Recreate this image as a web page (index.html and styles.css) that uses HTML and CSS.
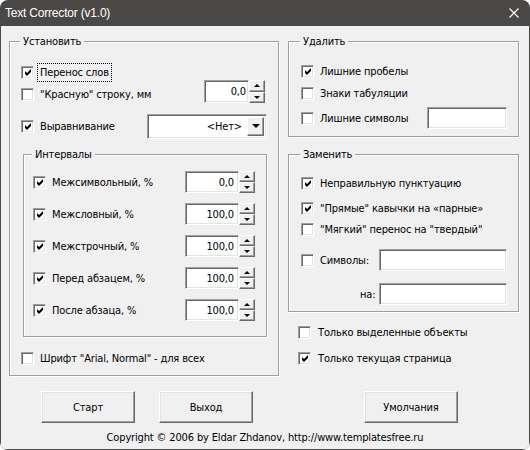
FILE: index.html
```html
<!DOCTYPE html>
<html lang="ru">
<head>
<meta charset="utf-8">
<title>Text Corrector (v1.0)</title>
<link rel="stylesheet" href="styles.css">
</head>
<body>
<div class="window">
  <div class="titlebar">
    <span class="title">Text Corrector (v1.0)</span>
    <svg class="close" viewBox="0 0 10 10" width="10" height="10"><path d="M0.5 0.5 L9.5 9.5 M9.5 0.5 L0.5 9.5" stroke="#fff" stroke-width="1.1" fill="none"/></svg>
  </div>
  <div class="client">
    <div class="columns">
      <div class="group g-set">
        <span class="legend">Установить</span>
        <div class="row s-r1">
          <span class="cb on"><svg viewBox="0 0 9 9" width="9" height="9"><path d="M1 3 L3 5 L7 1 V4 L3 8 L1 6 Z" fill="#000"/></svg></span>
          <span class="lbl focus">Перенос слов</span>
        </div>
        <div class="row s-r2">
          <span class="cb"></span>
          <span class="lbl">"Красную" строку, мм</span>
          <div class="spin spin-a">
            <span class="edit">0,0</span>
            <span class="updown"><span class="sb up"></span><span class="sb down"></span></span>
          </div>
        </div>
        <div class="row s-r3">
          <span class="cb on"><svg viewBox="0 0 9 9" width="9" height="9"><path d="M1 3 L3 5 L7 1 V4 L3 8 L1 6 Z" fill="#000"/></svg></span>
          <span class="lbl">Выравнивание</span>
          <div class="combo"><span class="combo-text">&lt;Нет&gt;</span><span class="dd"></span></div>
        </div>
        <div class="group g-int">
          <span class="legend">Интервалы</span>
          <div class="irow first">
            <span class="cb on"><svg viewBox="0 0 9 9" width="9" height="9"><path d="M1 3 L3 5 L7 1 V4 L3 8 L1 6 Z" fill="#000"/></svg></span>
            <span class="lbl">Межсимвольный, %</span>
            <div class="spin spin-b"><span class="edit">0,0</span><span class="updown"><span class="sb up"></span><span class="sb down"></span></span></div>
          </div>
          <div class="irow">
            <span class="cb on"><svg viewBox="0 0 9 9" width="9" height="9"><path d="M1 3 L3 5 L7 1 V4 L3 8 L1 6 Z" fill="#000"/></svg></span>
            <span class="lbl">Межсловный, %</span>
            <div class="spin spin-b"><span class="edit">100,0</span><span class="updown"><span class="sb up"></span><span class="sb down"></span></span></div>
          </div>
          <div class="irow">
            <span class="cb on"><svg viewBox="0 0 9 9" width="9" height="9"><path d="M1 3 L3 5 L7 1 V4 L3 8 L1 6 Z" fill="#000"/></svg></span>
            <span class="lbl">Межстрочный, %</span>
            <div class="spin spin-b"><span class="edit">100,0</span><span class="updown"><span class="sb up"></span><span class="sb down"></span></span></div>
          </div>
          <div class="irow">
            <span class="cb on"><svg viewBox="0 0 9 9" width="9" height="9"><path d="M1 3 L3 5 L7 1 V4 L3 8 L1 6 Z" fill="#000"/></svg></span>
            <span class="lbl">Перед абзацем, %</span>
            <div class="spin spin-b"><span class="edit">100,0</span><span class="updown"><span class="sb up"></span><span class="sb down"></span></span></div>
          </div>
          <div class="irow">
            <span class="cb on"><svg viewBox="0 0 9 9" width="9" height="9"><path d="M1 3 L3 5 L7 1 V4 L3 8 L1 6 Z" fill="#000"/></svg></span>
            <span class="lbl">После абзаца, %</span>
            <div class="spin spin-b"><span class="edit">100,0</span><span class="updown"><span class="sb up"></span><span class="sb down"></span></span></div>
          </div>
        </div>
        <div class="row s-r4">
          <span class="cb"></span>
          <span class="lbl">Шрифт "Arial, Normal" - для всех</span>
        </div>
      </div>

      <div class="rightcol">
        <div class="group g-del">
          <span class="legend">Удалить</span>
          <div class="row d-r1">
            <span class="cb on"><svg viewBox="0 0 9 9" width="9" height="9"><path d="M1 3 L3 5 L7 1 V4 L3 8 L1 6 Z" fill="#000"/></svg></span>
            <span class="lbl">Лишние пробелы</span>
          </div>
          <div class="row d-r2">
            <span class="cb"></span>
            <span class="lbl">Знаки табуляции</span>
          </div>
          <div class="row d-r3">
            <span class="cb"></span>
            <span class="lbl">Лишние символы</span>
            <span class="field f-del"></span>
          </div>
        </div>
        <div class="group g-rep">
          <span class="legend">Заменить</span>
          <div class="row z-r1">
            <span class="cb on"><svg viewBox="0 0 9 9" width="9" height="9"><path d="M1 3 L3 5 L7 1 V4 L3 8 L1 6 Z" fill="#000"/></svg></span>
            <span class="lbl">Неправильную пунктуацию</span>
          </div>
          <div class="row z-r2">
            <span class="cb on"><svg viewBox="0 0 9 9" width="9" height="9"><path d="M1 3 L3 5 L7 1 V4 L3 8 L1 6 Z" fill="#000"/></svg></span>
            <span class="lbl">"Прямые" кавычки на «парные»</span>
          </div>
          <div class="row z-r3">
            <span class="cb"></span>
            <span class="lbl">"Мягкий" перенос на "твердый"</span>
          </div>
          <div class="row z-r4">
            <span class="cb"></span>
            <span class="lbl">Символы:</span>
            <span class="field f-rep"></span>
          </div>
          <div class="row z-r5">
            <span class="na">на:</span>
            <span class="field f-rep"></span>
          </div>
        </div>
        <div class="row b-r1">
          <span class="cb"></span>
          <span class="lbl wide">Только выделенные объекты</span>
        </div>
        <div class="row b-r2">
          <span class="cb on"><svg viewBox="0 0 9 9" width="9" height="9"><path d="M1 3 L3 5 L7 1 V4 L3 8 L1 6 Z" fill="#000"/></svg></span>
          <span class="lbl wide">Только текущая страница</span>
        </div>
      </div>
    </div>

    <div class="buttons">
      <span class="btn b-start">Старт</span>
      <span class="btn b-exit">Выход</span>
      <span class="btn b-def">Умолчания</span>
    </div>
    <div class="copyright">Copyright © 2006 by Eldar Zhdanov, http://www.templatesfree.ru</div>
  </div>
</div>
</body>
</html>
```
FILE: styles.css
```css
* { box-sizing: border-box; }
html, body { margin: 0; padding: 0; background: #ffffff; }
body {
  width: 530px;
  height: 450px;
  overflow: hidden;
  font-family: "DejaVu Sans Condensed", "Liberation Sans", Arial, sans-serif;
  font-size: 11px;
  letter-spacing: -0.15px;
  color: #000;
}
.window {
  width: 530px;
  height: 450px;
  border-radius: 8px;
  overflow: hidden;
  background: #4a4846;
  padding: 0 1px 1px 1px;
  display: flex;
  flex-direction: column;
}
.titlebar {
  height: 26px;
  flex: none;
  display: flex;
  align-items: center;
  justify-content: space-between;
  padding: 0 10px 0 4px;
  color: #fff;
}
.title { font-family: "Liberation Sans", Arial, sans-serif; font-size: 12px; letter-spacing: -0.2px; }
.close { display: block; }

.client {
  flex: 1;
  background: #f0f0f0;
  padding-top: 15px;
  display: flex;
  flex-direction: column;
}
.columns {
  display: flex;
  align-items: flex-start;
  gap: 9px;
  margin-left: 8px;
}

/* group boxes */
.group {
  border: 1px solid #a0a0a0;
  box-shadow: 1px 1px 0 #fff, inset 1px 1px 0 #fff;
  display: flex;
  flex-direction: column;
}
.legend {
  display: block;
  width: max-content;
  height: 13px;
  line-height: 13px;
  margin: -7px 0 0 10px;
  padding: 0 3px;
  background: #f0f0f0;
}
.g-set { width: 270px; height: 335px; }
.g-int { width: 244px; height: 183px; margin: 15px 11px 0 13px; }
.g-int .legend { margin-left: 8px; }
.rightcol { width: 231px; display: flex; flex-direction: column; }
.g-del { height: 96px; }
.g-del .legend, .g-rep .legend { margin-left: 11px; }
.g-rep { height: 158px; margin-top: 17px; }

/* rows */
.row { display: flex; align-items: center; height: 22px; padding-left: 11px; }
.lbl { margin-left: 6px; white-space: nowrap; }
.s-r1 { margin-top: 14px; height: 20px; }
.s-r2 { height: 24px; }
.s-r3 { margin-top: 7px; height: 26px; }
.s-r4 { margin-top: 10px; }
.focus { outline: 1px dotted #000; outline-offset: 0; padding: 2px 2px 2px 2px; margin-left: 4px; line-height: 13px; }

.irow { display: flex; align-items: center; height: 32px; padding-left: 9px; }
.irow.first { margin-top: 5px; }

.d-r1 { margin-top: 12px; padding-left: 12px; }
.d-r2 { padding-left: 12px; }
.d-r3 { margin-top: 3px; padding-left: 12px; }
.z-r1 { margin-top: 11px; padding-left: 12px; }
.z-r2 { margin-top: 3px; padding-left: 12px; }
.z-r3 { height: 20px; padding-left: 12px; }
.z-r4 { margin-top: 10px; padding-left: 12px; }
.z-r5 { margin-top: 12px; padding-left: 71px; }
.b-r1 { margin-top: 9px; padding-left: 10px; }
.b-r2 { margin-top: 4px; padding-left: 10px; }
.wide { margin-left: 7px; }
.na { white-space: nowrap; }

/* checkbox */
.cb {
  flex: none;
  width: 13px;
  height: 13px;
  background: #fff;
  border: 1px solid;
  border-color: #a0a0a0 #fff #fff #a0a0a0;
  box-shadow: inset 1px 1px 0 #696969, inset -1px -1px 0 #e3e3e3;
  display: flex;
  align-items: center;
  justify-content: center;
}
.cb svg { display: block; margin: 1px 0 0 1px; }

/* sunken fields */
.edit, .field, .combo {
  background: #fff;
  border: 1px solid;
  border-color: #a0a0a0 #fff #fff #a0a0a0;
  box-shadow: inset 1px 1px 0 #696969, inset -1px -1px 0 #e3e3e3;
}
.field { height: 22px; margin-left: auto; margin-right: 11px; }
.f-del { width: 80px; }
.f-rep { width: 128px; }

.spin { display: flex; margin-left: auto; flex: none; }
.spin .edit { display: flex; align-items: center; justify-content: flex-end; }
.spin-a { align-self: flex-start; margin-top: -2px; margin-right: 13px; height: 23px; }
.spin-a .edit { width: 45px; padding-right: 2px; }
.spin-b { height: 22px; margin-right: 11px; }
.spin-b .edit { width: 54px; padding-right: 4px; }
.updown { display: flex; flex-direction: column; width: 16px; }
.sb {
  flex: 1;
  background: #f0f0f0;
  border: 1px solid;
  border-color: #fff #696969 #696969 #fff;
  box-shadow: inset -1px -1px 0 #a0a0a0;
  display: flex;
  align-items: center;
  justify-content: center;
}
.sb.up::after {
  content: "";
  border-left: 3px solid transparent;
  border-right: 3px solid transparent;
  border-bottom: 3px solid #000;
}
.sb.down::after {
  content: "";
  border-left: 3px solid transparent;
  border-right: 3px solid transparent;
  border-top: 3px solid #000;
}

.combo {
  margin-left: auto;
  margin-right: 11px;
  width: 120px;
  height: 25px;
  display: flex;
  align-items: center;
  justify-content: flex-end;
  padding: 2px;
}
.combo-text { margin-right: 5px; }
.dd {
  width: 17px;
  height: 100%;
  background: #f0f0f0;
  border: 1px solid;
  border-color: #fff #696969 #696969 #fff;
  box-shadow: inset -1px -1px 0 #a0a0a0;
  display: flex;
  align-items: center;
  justify-content: center;
}
.dd::after {
  content: "";
  border-left: 4px solid transparent;
  border-right: 4px solid transparent;
  border-top: 4px solid #000;
}

/* buttons */
.buttons { display: flex; margin-top: 15px; margin-left: 8px; }
.btn {
  width: 94px;
  height: 32px;
  display: flex;
  align-items: center;
  justify-content: center;
  background: #f0f0f0;
  border: 1px solid;
  border-color: #fff #696969 #696969 #fff;
  box-shadow: inset -1px -1px 0 #a0a0a0, inset 1px 1px 0 #e3e3e3;
}
.b-start { margin-left: 32px; }
.b-exit { margin-left: 24px; }
.b-def { margin-left: 111px; }

.copyright {
  margin-top: 8px;
  height: 14px;
  line-height: 14px;
  text-align: center;
}
```
